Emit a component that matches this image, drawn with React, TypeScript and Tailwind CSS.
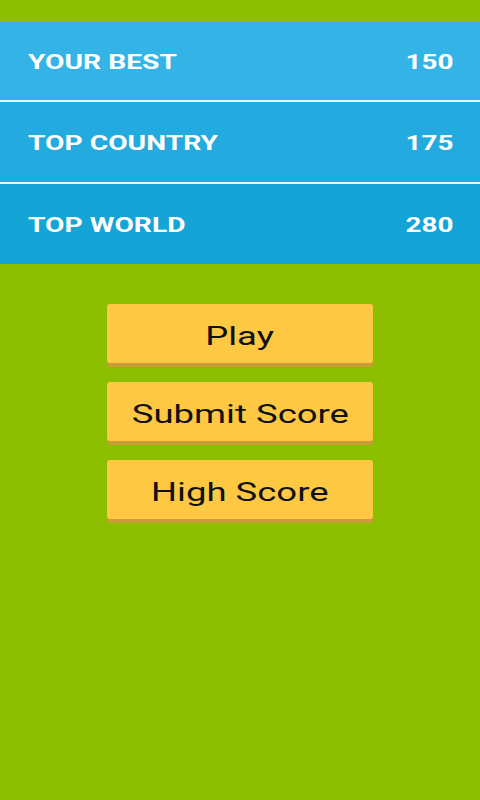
const rows = [
  { label: "YOUR BEST", value: "150", bg: "bg-[#34b4e6]", h: "h-[78px]" },
  { label: "TOP COUNTRY", value: "175", bg: "bg-[#23aade]", h: "h-[80px]" },
  { label: "TOP WORLD", value: "280", bg: "bg-[#15a4d6]", h: "h-[80px]" },
];

const buttons = ["Play", "Submit Score", "High Score"];

export default function App() {
  return (
    <div className="min-h-[800px] w-full bg-[#8cbf00] pt-[22px] font-['Roboto',sans-serif]">
      <div className="flex flex-col">
        {rows.map((r, i) => (
          <div key={r.label}>
            {i > 0 && <div className="h-[2px] bg-[#e8f6fc]" />}
            <div className={`flex items-center justify-between pt-[2px] pl-[28px] pr-[27px] ${r.h} ${r.bg}`}>
              <span className="inline-block origin-left scale-x-[1.41] text-[20px] font-bold text-white">
                {r.label}
              </span>
              <span className="inline-block origin-right scale-x-[1.39] text-[20px] font-bold text-white">
                {r.value}
              </span>
            </div>
          </div>
        ))}
      </div>

      <div className="mt-[40px] flex flex-col items-center gap-[15px]">
        {buttons.map((b) => (
          <button
            key={b}
            className="flex h-[63px] w-[266px] items-start rounded-[3px] bg-[#c99d35]"
          >
            <span className="flex h-[59px] w-full items-center justify-center rounded-[3px] bg-[#fec843] pt-[6px] text-[25px] text-[#111]">
              <span className="inline-block scale-x-[1.46]">{b}</span>
            </span>
          </button>
        ))}
      </div>
    </div>
  );
}
